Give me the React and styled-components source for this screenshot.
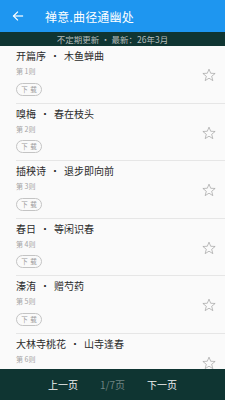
import React from 'react';
import styled, { createGlobalStyle } from 'styled-components';

const GlobalStyle = createGlobalStyle`
    html, body { margin: 0; padding: 0; }
    body {
        background: #fafafa;
        font-family: "Noto Sans CJK SC", "Noto Sans", sans-serif;
    }
`;

const Page = styled.div`
    width: 225px;
    height: 400px;
    position: relative;
    overflow: hidden;
    background: #fafafa;
    display: flex;
    flex-direction: column;
`;

const Header = styled.div`
    height: 32px;
    background: #1e96f0;
    display: flex;
    align-items: center;
    color: #fff;
    flex-shrink: 0;
`;

const Back = styled.div`
    width: 45px;
    display: flex;
    justify-content: center;
    padding-right: 10px;
    box-sizing: border-box;
`;

const Title = styled.div`
    font-size: 12px;
    font-weight: 400;
    letter-spacing: 0.2px;
`;

const SubBar = styled.div`
    height: 14px;
    background: #0f3532;
    color: #b5bcbb;
    font-size: 8.5px;
    line-height: 14px;
    text-align: center;
    flex-shrink: 0;
`;

const List = styled.div`
    flex: 1;
    overflow: hidden;
`;

const Row = styled.div`
    display: flex;
    margin-left: 16px;
    border-bottom: 1px solid #e6e6e6;
    height: 57.5px;
    box-sizing: border-box;
`;

const Info = styled.div`
    flex: 1;
    display: flex;
    flex-direction: column;
    align-items: flex-start;
    padding-top: 3px;
`;

const Name = styled.div`
    font-size: 10px;
    line-height: 14px;
    color: #2b2b2b;
    white-space: nowrap;
`;

const Dot = styled.span`
    margin: 0 4px;
`;

const Index = styled.div`
    font-size: 7px;
    line-height: 10px;
    color: #a5a5a5;
    margin-top: 3px;
    white-space: nowrap;
`;

const Download = styled.div`
    margin-top: 6.5px;
    width: 26px;
    height: 13px;
    border: 1px solid #c4c4c4;
    border-radius: 7px;
    box-sizing: border-box;
    font-size: 6.5px;
    line-height: 11px;
    color: #9a9a9a;
    text-align: center;
    letter-spacing: 2.5px;
    padding-left: 2.5px;
    white-space: nowrap;
`;

const Star = styled.div`
    width: 16px;
    margin-right: 8px;
    display: flex;
    justify-content: center;
    align-self: center;
    margin-top: 2px;
`;

const Footer = styled.div`
    position: absolute;
    left: 0;
    right: 0;
    bottom: 0;
    height: 31px;
    background: #0f3532;
    display: flex;
    justify-content: center;
    align-items: center;
    gap: 22px;
    font-size: 10px;
`;

const PageBtn = styled.div`
    color: ${p => (p.dim ? '#6f8482' : '#f2f2f2')};
    white-space: nowrap;
`;

const items = [
    ['开篇序', '木鱼蝉曲'],
    ['嗅梅', '春在枝头'],
    ['插秧诗', '退步即向前'],
    ['春日', '等闲识春'],
    ['溱洧', '赠芍药'],
    ['大林寺桃花', '山寺逢春'],
];

const StarIcon = () => (
    <svg width="14" height="14" viewBox="0 0 24 24" fill="none" stroke="#9a9a9a" strokeWidth="1.1" strokeLinejoin="miter">
        <polygon points="12,2 14.9,9 22.5,9.4 16.6,14.2 18.6,21.6 12,17.5 5.4,21.6 7.4,14.2 1.5,9.4 9.1,9" />
    </svg>
);

export default function App() {
    return (
        <Page>
            <GlobalStyle />
            <Header>
                <Back>
                    <svg width="12" height="12" viewBox="0 0 24 24" fill="none" stroke="#fff" strokeWidth="2.4" strokeLinecap="square">
                        <path d="M21 12H4" />
                        <path d="M11 4l-8 8 8 8" />
                    </svg>
                </Back>
                <Title>禅意.曲径通幽处</Title>
            </Header>
            <SubBar>不定期更新 · 最新：26年3月</SubBar>
            <List>
                {items.map(([a, b], i) => (
                    <Row key={i}>
                        <Info>
                            <Name>{a}<Dot>·</Dot>{b}</Name>
                            <Index>第 {i + 1}则</Index>
                            <Download>下载</Download>
                        </Info>
                        <Star><StarIcon /></Star>
                    </Row>
                ))}
            </List>
            <Footer>
                <PageBtn>上一页</PageBtn>
                <PageBtn dim>1/7页</PageBtn>
                <PageBtn>下一页</PageBtn>
            </Footer>
        </Page>
    );
}
